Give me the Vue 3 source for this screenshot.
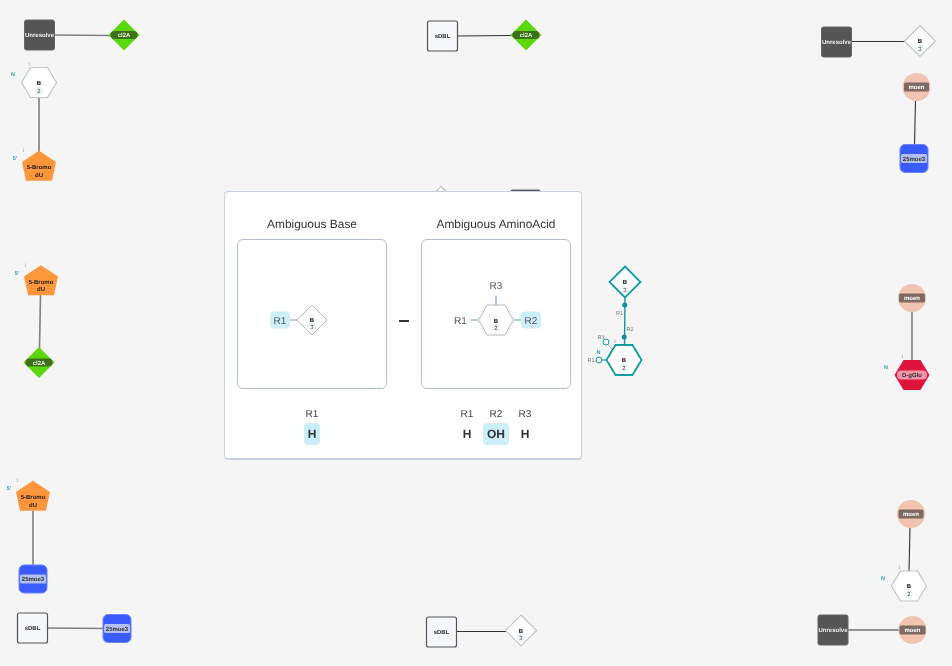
<template>
  <div class="canvas">
    <svg class="graph" width="952" height="666" viewBox="0 0 952 666">
      <!-- 连线 -->
      <line v-for="(l, i) in links" :key="'l' + i" :x1="l[0]" :y1="l[1]" :x2="l[2]" :y2="l[3]" :class="['link', l[4]]" />

      <!-- 选中的链接 -->
      <g class="sel-link">
        <line x1="625" y1="297" x2="624.5" y2="345" />
        <circle cx="624.8" cy="305" r="2.5" />
        <circle cx="624.2" cy="337" r="2.5" />
      </g>
      <line class="r-stub" x1="612" y1="349" x2="608" y2="345" />
      <line class="r-stub teal" x1="607" y1="360" x2="602" y2="360" />
      <circle class="r-dot" cx="606" cy="342" r="3" />
      <circle class="r-dot" cx="599" cy="360" r="3" />
      <text class="tiny" x="601" y="339" text-anchor="middle">R3</text>
      <text class="tiny" x="591" y="362" text-anchor="middle">R1</text>
      <text class="tiny" x="619.5" y="315" text-anchor="middle">R1</text>
      <text class="tiny" x="630" y="331" text-anchor="middle">R2</text>
      <text class="tag-n" x="598.5" y="354" text-anchor="middle">N</text>
      <text class="tag-one" x="615" y="343" text-anchor="middle">1</text>

      <!-- 节点 -->
      <g v-for="(n, i) in nodes" :key="'n' + i" :transform="`translate(${n.x} ${n.y})`" :class="['node', n.kind, { selected: n.selected }]">
        <rect v-if="n.shape === 'square'" x="-15" y="-15" width="30" height="30" rx="2" class="body" />
        <rect v-else-if="n.shape === 'blue'" x="-14" y="-14" width="28" height="28" rx="5" class="body" />
        <circle v-else-if="n.shape === 'circle'" r="14" class="body" />
        <polygon v-else :points="shapes[n.shape]" class="body" />

        <template v-if="n.base">
          <text class="base" y="2" text-anchor="middle">B</text>
          <circle class="num-ring" :cy="n.shape === 'hex' ? 8 : 7.5" r="3.4" />
          <text class="num" :y="n.shape === 'hex' ? 10 : 9.5" text-anchor="middle">{{ n.base }}</text>
        </template>
        <template v-else-if="n.wrap">
          <text class="lbl dark" y="2" text-anchor="middle">{{ n.wrap[0] }}</text>
          <text class="lbl dark" y="9.5" text-anchor="middle">{{ n.wrap[1] }}</text>
        </template>
        <template v-else>
          <rect v-if="n.pill" :x="-n.pill / 2" :y="n.kind === 'green' ? -4 : -4.5" :width="n.pill" :height="n.kind === 'green' ? 8 : 9" :rx="n.kind === 'green' || n.kind === 'red' ? 4 : 1.5" class="pill" />
          <text class="lbl" y="2.1" text-anchor="middle">{{ n.label }}</text>
        </template>

        <template v-if="n.one">
          <text class="tag-one" :x="n.one[0]" :y="n.one[1]" text-anchor="middle">1</text>
          <text class="tag-n" :x="n.one[2]" :y="n.one[3]" text-anchor="middle">{{ n.one[4] }}</text>
        </template>
      </g>
    </svg>

    <!-- 弹层 -->
    <div class="popup">
      <div class="columns">
        <section class="col">
          <h3 class="col__title">Ambiguous Base</h3>
          <div class="panel">
            <svg width="148" height="148" viewBox="0 0 148 148">
              <line class="stub" x1="52" y1="80" x2="60" y2="80" />
              <rect class="r-chip" x="32" y="71.5" width="20" height="17" rx="4" />
              <text class="r-text" x="42" y="83.5" text-anchor="middle">R1</text>
              <polygon class="mono" points="74,65 89,80 74,95 59,80" />
              <text class="base" x="74" y="82" text-anchor="middle">B</text>
              <circle class="num-ring" cx="74" cy="87" r="3.4" />
              <text class="num" x="74" y="89" text-anchor="middle">3</text>
            </svg>
          </div>
          <div class="values">
            <div class="value">
              <span class="value__key">R1</span>
              <span class="value__val value__val--on">H</span>
            </div>
          </div>
        </section>

        <div class="minus"></div>

        <section class="col">
          <h3 class="col__title">Ambiguous AminoAcid</h3>
          <div class="panel">
            <svg width="148" height="148" viewBox="0 0 148 148">
              <line class="stub" x1="74" y1="56" x2="74" y2="65" />
              <line class="stub" x1="49" y1="80" x2="57" y2="80" />
              <line class="stub" x1="91" y1="80" x2="99" y2="80" />
              <text class="r-text" x="74" y="48.5" text-anchor="middle">R3</text>
              <text class="r-text" x="38.500" y="83.5" text-anchor="middle">R1</text>
              <rect class="r-chip" x="99" y="71.5" width="20" height="17" rx="4" />
              <text class="r-text" x="109" y="83.5" text-anchor="middle">R2</text>
              <polygon class="mono" points="56.500,80 65,65 83,65 91.500,80 83,95 65,95" />
              <text class="base" x="74" y="82.500" text-anchor="middle">B</text>
              <circle class="num-ring" cx="74" cy="88" r="3.4" />
              <text class="num" x="74" y="90" text-anchor="middle">2</text>
            </svg>
          </div>
          <div class="values">
            <div class="value">
              <span class="value__key">R1</span>
              <span class="value__val">H</span>
            </div>
            <div class="value">
              <span class="value__key">R2</span>
              <span class="value__val value__val--on">OH</span>
            </div>
            <div class="value">
              <span class="value__key">R3</span>
              <span class="value__val">H</span>
            </div>
          </div>
        </section>
      </div>
    </div>
  </div>
</template>

<script setup>
const shapes = {
  hex: '-17.5,0 -8.5,-15 8.5,-15 17.5,0 8.5,15 -8.5,15',
  diamond: '0,-15.500 15.500,0 0,15.500 -15.500,0',
  pent: '0,-16.300 17,-5 13,13.700 -13,13.700 -17,-5',
}

const links = [
  [54, 35, 110, 35.5],
  [39, 96, 39, 152],
  [40.5, 295, 39.5, 349],
  [33, 510, 33, 566],
  [47, 628, 104, 628.5],
  [457, 36, 512, 35.5, 'thin'],
  [456, 631.5, 507, 631.5, 'thin'],
  [851, 41.5, 906, 41.5, 'thin'],
  [915.5, 100, 914.5, 145, 'thin'],
  [912, 311, 912, 361],
  [910, 527, 909, 572, 'thin'],
  [848, 630, 899, 630, 'thin'],
]

const nodes = [
  { shape: 'square', kind: 'dark', x: 39.5, y: 35, label: 'Unresolve' },
  { shape: 'diamond', kind: 'green', x: 124, y: 35, label: 'cl2A', pill: 27 },
  { shape: 'hex', kind: 'white', x: 39, y: 82.5, base: 2, one: [-9.500, -17, -26, -6.500, 'N'] },
  { shape: 'pent', kind: 'orange', x: 39, y: 167, wrap: ['5-Bromo', 'dU'], one: [-15.500, -15, -24, -7, "5'"] },
  { shape: 'pent', kind: 'orange', x: 41, y: 281.5, wrap: ['5-Bromo', 'dU'], one: [-15.500, -15, -24, -7, "5'"] },
  { shape: 'diamond', kind: 'green', x: 39, y: 362.5, label: 'cl2A', pill: 27 },
  { shape: 'pent', kind: 'orange', x: 33, y: 497, wrap: ['5-Bromo', 'dU'], one: [-15.500, -15, -24, -7, "5'"] },
  { shape: 'blue', kind: 'blue', x: 33, y: 579, label: '25moe3', pill: 26 },
  { shape: 'square', kind: 'light', x: 32.5, y: 628, label: 'sDBL' },
  { shape: 'blue', kind: 'blue', x: 117, y: 628.5, label: '25moe3', pill: 26 },
  { shape: 'square', kind: 'light', x: 442.5, y: 36, label: 'sDBL' },
  { shape: 'diamond', kind: 'green', x: 526, y: 35, label: 'cl2A', pill: 27 },
  { shape: 'square', kind: 'light', x: 441.5, y: 632, label: 'sDBL' },
  { shape: 'diamond', kind: 'white', x: 521, y: 630.5, base: 3 },
  { shape: 'square', kind: 'dark', x: 836.5, y: 42, label: 'Unresolve' },
  { shape: 'diamond', kind: 'white', x: 920, y: 41, base: 3 },
  { shape: 'circle', kind: 'moen', x: 916.500, y: 87, label: 'moen', pill: 25 },
  { shape: 'blue', kind: 'blue', x: 914, y: 158.5, label: '25moe3', pill: 26 },
  { shape: 'circle', kind: 'moen', x: 912, y: 298, label: 'moen', pill: 26 },
  { shape: 'hex', kind: 'red', x: 912, y: 375, label: 'D-gGlu', pill: 30, one: [-9.500, -17, -26, -6.500, 'N'] },
  { shape: 'circle', kind: 'moen', x: 911, y: 514, label: 'moen', pill: 25 },
  { shape: 'hex', kind: 'white', x: 909, y: 586, base: 2, one: [-9.500, -17, -26, -6.500, 'N'] },
  { shape: 'square', kind: 'dark', x: 833, y: 630, label: 'Unresolve' },
  { shape: 'circle', kind: 'moen', x: 912.500, y: 630, label: 'moen', pill: 26 },
  { shape: 'diamond', kind: 'white', x: 625, y: 282, base: 3, selected: true },
  { shape: 'hex', kind: 'white', x: 624, y: 360, base: 2, selected: true },
  // 被弹层盖住的节点
  { shape: 'diamond', kind: 'white', x: 441, y: 202, base: 3 },
  { shape: 'square', kind: 'dark', x: 525.5, y: 205, label: '' },
]
</script>

<style scoped>
.canvas {
  position: relative;
  width: 952px;
  height: 666px;
  overflow: hidden;
  background: #f5f5f5;
  font-family: "Liberation Sans", Arial, sans-serif;
  text-rendering: geometricPrecision;
}

.graph {
  position: absolute;
  inset: 0;
  font-family: "Liberation Sans", Arial, sans-serif;
  will-change: transform;
}

.link {
  stroke: #808080;
  stroke-width: 1.6;
}

.link.thin {
  stroke: #333;
  stroke-width: 1.1;
}

/* 节点 */
.body {
  stroke-width: 1;
}

.dark .body {
  fill: #555;
  stroke: #666;
}

.dark .lbl {
  fill: #eee;
}

.light .body {
  fill: #f5f6f9;
  stroke: #555;
  stroke-width: 1.2;
}

.light .lbl {
  fill: #333;
}

.white .body {
  fill: #fff;
  stroke: #c4c4c4;
  stroke-width: 1.2;
}

.green .body {
  fill: #5ad80a;
}

.green .pill {
  fill: #3e6f1c;
}

.green .lbl {
  fill: #e4f2d8;
}

.orange .body {
  fill: #ff963c;
}

.blue .body {
  fill: #3a5bff;
  stroke: #6a84ff;
}

.blue .pill {
  fill: #b2bff2;
}

.blue .lbl {
  fill: #333;
}

.moen .body {
  fill: #f3c3b2;
}

.moen .pill {
  fill: #7d6a63;
}

.moen .lbl {
  fill: #fff;
}

.red .body {
  fill: #e0143c;
}

.red .pill {
  fill: #f295a8;
}

.red .lbl {
  fill: #333;
}

.selected .body {
  fill: #fff;
  stroke: #0f9aa8;
  stroke-width: 1.8;
}

.lbl {
  font-size: 6px;
  font-weight: 700;
}

.lbl.dark {
  fill: #222;
}

.base {
  font-size: 6px;
  font-weight: 700;
  fill: #111;
}

.num {
  font-size: 6px;
  fill: #333;
}

.num-ring {
  fill: #fff;
  stroke: #cdeaf2;
  stroke-width: 0.8;
}

.tag-one {
  font-size: 5px;
  fill: #aaa;
}

.tag-n {
  font-size: 5.5px;
  font-weight: 700;
  fill: #1b9db5;
}

.tiny {
  font-size: 5.5px;
  fill: #777;
}

/* 选中链接 */
.sel-link line {
  stroke: #0f9aa8;
  stroke-width: 1.4;
}

.sel-link circle {
  fill: #0f8d9b;
}

.r-stub {
  stroke: #aaa;
  stroke-width: 1;
}

.r-stub.teal {
  stroke: #0f8d9b;
}

.r-dot {
  fill: #f5f5f5;
  stroke: #0f9aa8;
  stroke-width: 1;
}

/* 弹层 */
.popup {
  position: absolute;
  left: 224px;
  top: 191px;
  box-sizing: border-box;
  width: 358px;
  height: 269px;
  padding: 24px 10px 0 12px;
  background: #fff;
  border: 1px solid #c9d1de;
  border-bottom-width: 2px;
  border-radius: 4px;
  will-change: transform;
}

.columns {
  display: flex;
  gap: 0;
}

.col {
  display: flex;
  flex-direction: column;
  align-items: center;
  width: 150px;
}

.col__title {
  margin: 0 0 7px;
  font-size: 11.9px;
  font-weight: 400;
  line-height: 16px;
  color: #333;
  white-space: nowrap;
}

.panel {
  box-sizing: border-box;
  width: 150px;
  height: 150px;
  border: 1px solid #b4bcd4;
  border-radius: 6px;
}

.panel svg {
  display: block;
  font-family: "Liberation Sans", Arial, sans-serif;
}

.minus {
  flex: none;
  align-self: flex-start;
  width: 10px;
  height: 2px;
  margin: 104px 12px 0;
  background: #333;
}

.stub {
  stroke: #85bcc4;
  stroke-width: 1.4;
}

.mono {
  fill: #fff;
  stroke: #b9b9b9;
  stroke-width: 1;
}

.r-chip {
  fill: #cdeffc;
}

.r-text {
  font-size: 10px;
  fill: #555;
}

.values {
  display: flex;
  justify-content: center;
  gap: 3px;
  margin-top: 20px;
}

.value {
  display: flex;
  flex-direction: column;
  align-items: center;
  gap: 2px;
  min-width: 26px;
}

.value__key {
  font-size: 10px;
  line-height: 12px;
  color: #444;
}

.value__val {
  box-sizing: border-box;
  padding: 0 4px;
  font-size: 12px;
  font-weight: 700;
  line-height: 22px;
  color: #333;
  border-radius: 4px;
}

.value__val--on {
  background: #cdeffc;
}
</style>
